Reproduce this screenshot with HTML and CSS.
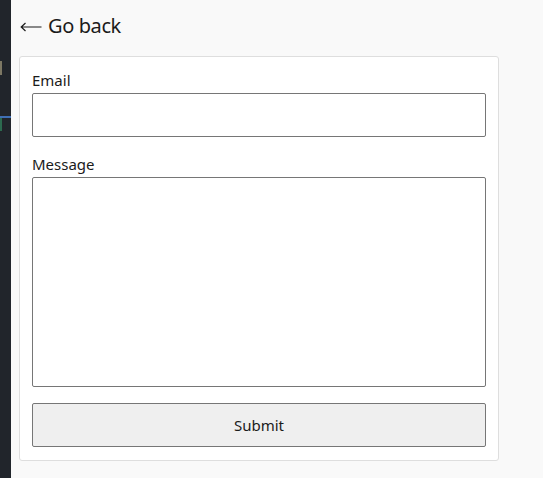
FILE: index.html
```html
<!DOCTYPE html>
<html>
<head>
<meta charset="utf-8">
<link rel="stylesheet" href="styles.css">
</head>
<body>
<aside class="strip">
  <span class="mark mark-khaki"></span>
  <span class="mark-line"></span>
  <span class="mark mark-green"></span>
</aside>
<main class="main">
  <a class="back" href="#"><svg class="arrow" width="22" height="10" viewBox="0 0 22 10" aria-hidden="true"><path d="M21.5 5H1.2M5.5 1L1.2 5L5.5 9" fill="none" stroke="#1b1b1b" stroke-width="1.2"/></svg>Go back</a>
  <form class="card">
    <label class="field">
      <span class="label">Email</span>
      <input class="input" type="email">
    </label>
    <label class="field">
      <span class="label">Message</span>
      <textarea class="input textarea"></textarea>
    </label>
    <button class="button" type="button">Submit</button>
  </form>
</main>
</body>
</html>
```
FILE: styles.css
```css
html, body {
  margin: 0;
  padding: 0;
  height: 100%;
}
body {
  display: flex;
  background: #f9f9f9;
  font-family: "Noto Sans", "Open Sans", sans-serif;
  color: #1b1b1b;
  overflow: hidden;
}
.strip {
  width: 11px;
  flex: none;
  background: #21252b;
  display: flex;
  flex-direction: column;
  padding-top: 61px;
  box-sizing: border-box;
}
.mark {
  display: block;
  width: 2px;
}
.mark-khaki {
  height: 14px;
  background: #7d7864;
}
.mark-line {
  display: block;
  margin-top: 41px;
  height: 2px;
  background: #3f6fb4;
}
.mark-green {
  height: 13px;
  background: #2c6a4f;
}
.main {
  padding: 12px 0 0 8px;
  display: flex;
  flex-direction: column;
  align-items: flex-start;
}
.back {
  display: flex;
  align-items: center;
  gap: 6px;
  font-size: 20px;
  line-height: 28px;
  letter-spacing: -0.4px;
  color: #1b1b1b;
  text-decoration: none;
  margin-bottom: 16px;
  margin-left: 1px;
}
.arrow {
  display: block;
  margin-top: 2px;
}
.card {
  width: 480px;
  box-sizing: border-box;
  background: #fff;
  border: 1px solid #dedede;
  border-radius: 3px;
  padding: 12px 12px 13px;
  display: flex;
  flex-direction: column;
  gap: 16px;
}
.field {
  display: flex;
  flex-direction: column;
  gap: 2px;
}
.label {
  font-size: 15px;
  line-height: 22px;
}
.input {
  box-sizing: border-box;
  width: 100%;
  height: 44px;
  border: 1px solid #767676;
  border-radius: 2px;
  background: #fff;
  margin: 0;
  font: inherit;
}
.textarea {
  height: 210px;
  resize: none;
  display: block;
}
.button {
  box-sizing: border-box;
  height: 44px;
  width: 100%;
  border: 1px solid #767676;
  border-radius: 2px;
  background: #efefef;
  font-family: inherit;
  font-size: 15px;
  color: #1b1b1b;
}
```
